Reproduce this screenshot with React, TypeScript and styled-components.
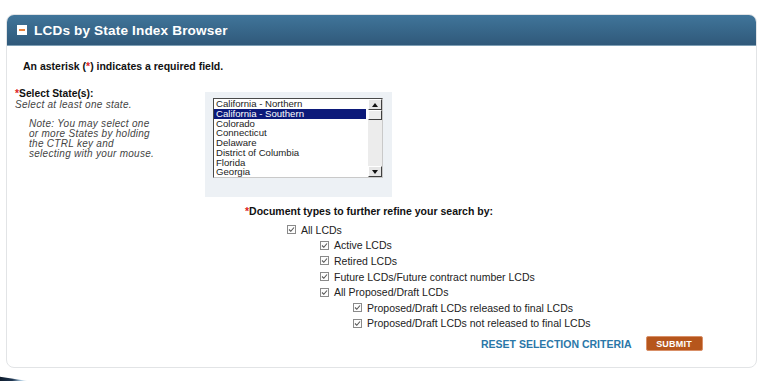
import React from "react";
import styled, { createGlobalStyle } from "styled-components";

const Global = createGlobalStyle`
  html, body { margin: 0; padding: 0; background: #ffffff; }
  body { font-family: "Liberation Sans", Arial, sans-serif; color: #111; }
  * { box-sizing: border-box; }
`;

const Page = styled.div`
  width: 768px;
  height: 381px;
  padding: 14px 11px 0 6px;
  position: relative;
  overflow: hidden;
`;

const Panel = styled.section`
  border: 1px solid #e2e4e6;
  border-radius: 8px;
  height: 354px;
  overflow: hidden;
  background: #fff;
  display: flex;
  flex-direction: column;
`;

const Header = styled.header`
  height: 31px;
  background: linear-gradient(#40759a, #30597a);
  display: flex;
  align-items: center;
  gap: 7px;
  padding-left: 10px;
  border-bottom: 1px solid #7e9fb5;
`;

const Toggle = styled.span`
  width: 10px;
  height: 10px;
  background: #fff;
  display: flex;
  align-items: center;
  justify-content: center;
  &::after {
    content: "";
    width: 6px;
    height: 2px;
    background: #e8803a;
  }
`;

const Title = styled.h2`
  margin: 0;
  color: #fff;
  font-size: 13.6px;
  font-weight: bold;
  letter-spacing: 0.15px;
`;

const Body = styled.div`
  padding: 14px 0 0 8px;
  display: flex;
  flex-direction: column;
`;

const Notice = styled.p`
  margin: 0 0 0 8px;
  font-size: 10.5px;
  line-height: 13px;
  font-weight: bold;
  color: #111;
`;

const Req = styled.span`
  color: #d22;
`;

const FormRow = styled.div`
  display: flex;
  margin-top: 16px;
`;

const LabelCol = styled.div`
  width: 190px;
  display: flex;
  flex-direction: column;
`;

const Label = styled.div`
  font-size: 10.3px;
  font-weight: bold;
  line-height: 10.5px;
  color: #111;
`;

const Help = styled.div<{ $indent?: number; $top?: number }>`
  font-size: 10px;
  font-style: italic;
  line-height: 10px;
  letter-spacing: 0.28px;
  color: #444;
  margin-left: ${(p) => p.$indent ?? 0}px;
  margin-top: ${(p) => p.$top ?? 0}px;
`;

const SelectBox = styled.div`
  margin-top: 3px;
  width: 187px;
  height: 105px;
  background: #edf1f5;
  padding: 6px 9px 0 8px;
`;

const ListBox = styled.div`
  width: 170px;
  height: 80px;
  border: 1px solid #4a4a4a;
  border-right-color: #c9c9c9;
  border-bottom-color: #c9c9c9;
  background: #fff;
  display: flex;
`;

const Options = styled.div`
  flex: 1;
  display: flex;
  flex-direction: column;
`;

const Option = styled.div<{ $selected?: boolean }>`
  font-size: 9.6px;
  line-height: 9.75px;
  height: 9.75px;
  padding-left: 2px;
  color: ${(p) => (p.$selected ? "#fff" : "#222")};
  background: ${(p) => (p.$selected ? "#0c1a7a" : "transparent")};
  margin-right: ${(p) => (p.$selected ? "2px" : "0")};
  white-space: nowrap;
`;

const Scroll = styled.div`
  width: 14px;
  background: #ececec;
  display: flex;
  flex-direction: column;
  justify-content: space-between;
`;

const ScrollBtn = styled.div`
  height: 11px;
  background: #e6e6e6;
  border: 1px solid #fff;
  border-right-color: #404040;
  border-bottom-color: #404040;
  display: flex;
  align-items: center;
  justify-content: center;
`;

const Thumb = styled(ScrollBtn)`
  height: 10px;
  background: #ededed;
`;

const ScrollTop = styled.div`
  display: flex;
  flex-direction: column;
`;

const Arrow = ({ down }: { down?: boolean }) => (
  <svg width="6" height="4" viewBox="0 0 6 4">
    <polygon points={down ? "0,0 6,0 3,4" : "0,4 6,4 3,0"} fill="#111" />
  </svg>
);

const DocSection = styled.div`
  margin-left: 230px;
  margin-top: 8px;
  display: flex;
  flex-direction: column;
`;

const DocHeading = styled.div`
  font-size: 10.5px;
  font-weight: bold;
  line-height: 12px;
  color: #111;
  margin-bottom: 5px;
`;

const CheckRow = styled.label<{ $level: number }>`
  display: flex;
  align-items: center;
  gap: 5px;
  height: 15.6px;
  margin-left: ${(p) => 42 + p.$level * 33}px;
  font-size: 10.5px;
  color: #222;
`;

const Box = styled.span`
  width: 9px;
  height: 9px;
  border: 1px solid #8a8a8a;
  background: #fdfdfd;
  display: flex;
  align-items: center;
  justify-content: center;
`;

const Actions = styled.div`
  display: flex;
  align-items: center;
  margin-left: 466px;
  margin-top: 5px;
  gap: 14px;
`;

const ResetLink = styled.a`
  font-size: 10.5px;
  font-weight: bold;
  color: #2a77a8;
  text-decoration: none;
`;

const Submit = styled.button`
  width: 57px;
  height: 15px;
  background: #b6561c;
  border: 1px solid #d99068;
  border-radius: 2px;
  color: #fff;
  font-family: "Liberation Sans", Arial, sans-serif;
  font-size: 9px;
  font-weight: bold;
  padding: 0;
  letter-spacing: 0.2px;
`;

const Corner = styled.div`
  position: absolute;
  left: 0;
  bottom: 0;
  width: 28px;
  height: 6px;
  background: linear-gradient(100deg, #0f1c2c 0%, #1e3550 45%, #a8c6dc 75%, transparent 100%);
  clip-path: polygon(0 30%, 100% 100%, 0 100%);
`;

const Check = () => (
  <Box>
    <svg width="7" height="7" viewBox="0 0 7 7">
      <polyline points="1,3.5 2.8,5.3 6,1.5" fill="none" stroke="#555" strokeWidth="1.1" />
    </svg>
  </Box>
);

const states = [
  "California - Northern",
  "California - Southern",
  "Colorado",
  "Connecticut",
  "Delaware",
  "District of Columbia",
  "Florida",
  "Georgia",
];

const docTypes: [string, number][] = [
  ["All LCDs", 0],
  ["Active LCDs", 1],
  ["Retired LCDs", 1],
  ["Future LCDs/Future contract number LCDs", 1],
  ["All Proposed/Draft LCDs", 1],
  ["Proposed/Draft LCDs released to final LCDs", 2],
  ["Proposed/Draft LCDs not released to final LCDs", 2],
];

export default function App() {
  return (
    <Page>
      <Global />
      <Panel>
        <Header>
          <Toggle />
          <Title>LCDs by State Index Browser</Title>
        </Header>
        <Body>
          <Notice>
            An asterisk (<Req>*</Req>) indicates a required field.
          </Notice>
          <FormRow>
            <LabelCol>
              <Label>
                <Req>*</Req>Select State(s):
              </Label>
              <Help>Select at least one state.</Help>
              <Help $indent={14} $top={9}>
                Note: You may select one
                <br />
                or more States by holding
                <br />
                the CTRL key and
                <br />
                selecting with your mouse.
              </Help>
            </LabelCol>
            <SelectBox>
              <ListBox>
                <Options>
                  {states.map((s, i) => (
                    <Option key={s} $selected={i === 1}>
                      {s}
                    </Option>
                  ))}
                </Options>
                <Scroll>
                  <ScrollTop>
                    <ScrollBtn>
                      <Arrow />
                    </ScrollBtn>
                    <Thumb />
                  </ScrollTop>
                  <ScrollBtn>
                    <Arrow down />
                  </ScrollBtn>
                </Scroll>
              </ListBox>
            </SelectBox>
          </FormRow>
          <DocSection>
            <DocHeading>
              <Req>*</Req>Document types to further refine your search by:
            </DocHeading>
            {docTypes.map(([label, level]) => (
              <CheckRow key={label} $level={level}>
                <Check />
                {label}
              </CheckRow>
            ))}
          </DocSection>
          <Actions>
            <ResetLink href="#">RESET SELECTION CRITERIA</ResetLink>
            <Submit>SUBMIT</Submit>
          </Actions>
        </Body>
      </Panel>
      <Corner />
    </Page>
  );
}
